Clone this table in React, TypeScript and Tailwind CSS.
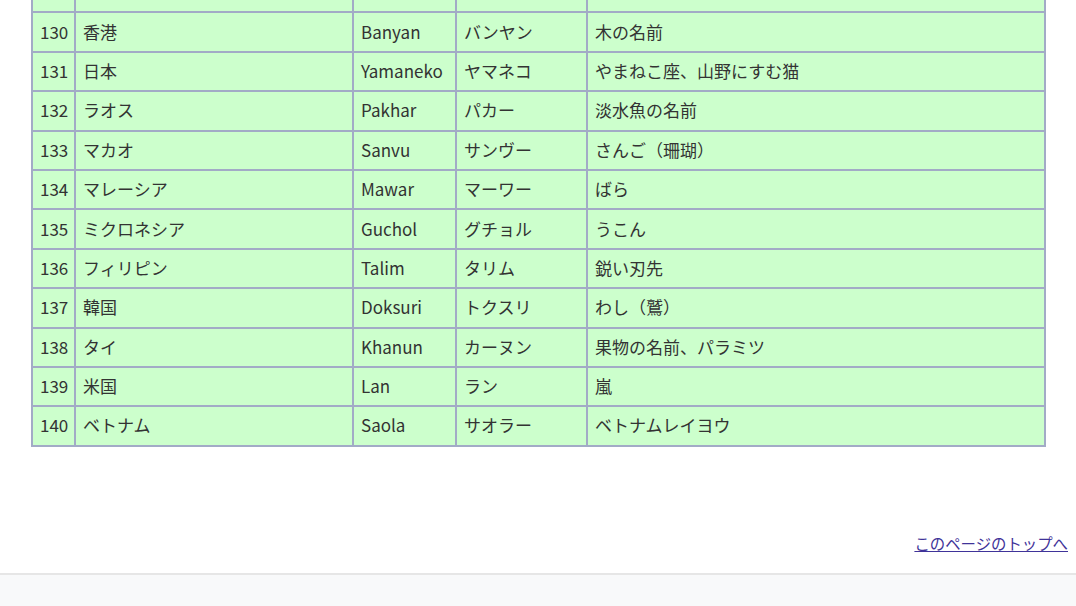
import React from "react";

type Row = [number, string, string, string, string];

const rows: Row[] = [
  [130, "香港", "Banyan", "バンヤン", "木の名前"],
  [131, "日本", "Yamaneko", "ヤマネコ", "やまねこ座、山野にすむ猫"],
  [132, "ラオス", "Pakhar", "パカー", "淡水魚の名前"],
  [133, "マカオ", "Sanvu", "サンヴー", "さんご（珊瑚）"],
  [134, "マレーシア", "Mawar", "マーワー", "ばら"],
  [135, "ミクロネシア", "Guchol", "グチョル", "うこん"],
  [136, "フィリピン", "Talim", "タリム", "鋭い刃先"],
  [137, "韓国", "Doksuri", "トクスリ", "わし（鷲）"],
  [138, "タイ", "Khanun", "カーヌン", "果物の名前、パラミツ"],
  [139, "米国", "Lan", "ラン", "嵐"],
  [140, "ベトナム", "Saola", "サオラー", "ベトナムレイヨウ"],
];

const cell = "border-2 border-[#a2abc6] px-[7px] h-[39.4px] pt-0 pb-[2px] align-middle";

export default function App() {
  return (
    <div
      className="min-h-screen bg-white text-[#333] text-[17px]"
      style={{ fontFamily: '"Noto Sans CJK JP", "Noto Sans", sans-serif' }}
    >
      <div className="pl-[31px] pr-2 -mt-[28px]">
        <table className="table-fixed border-collapse w-[1015px] bg-[#ccffcc] leading-[25px]">
          <colgroup>
            <col className="w-[43px]" />
            <col className="w-[278px]" />
            <col className="w-[103px]" />
            <col className="w-[131px]" />
            <col className="w-[458px]" />
          </colgroup>
          <tbody>
            {/* previous row, scrolled mostly out of view */}
            <tr>
              <td className={cell}></td>
              <td className={cell}></td>
              <td className={cell}></td>
              <td className={cell}></td>
              <td className={cell}></td>
            </tr>
            {rows.map((r) => (
              <tr key={r[0]}>
                <td className={cell}>{r[0]}</td>
                <td className={cell}>{r[1]}</td>
                <td className={cell}>{r[2]}</td>
                <td className={cell}>{r[3]}</td>
                <td className={cell}>{r[4]}</td>
              </tr>
            ))}
          </tbody>
        </table>

        <p className="mt-[84px] text-right text-[15.4px] leading-[24px]">
          <a href="#top" className="text-[#3f3399] underline">
            このページのトップへ
          </a>
        </p>
      </div>

      <footer className="mt-[18px] border-t-2 border-[#e6e6e6] bg-[#f8f9fa] h-[40px]" />
    </div>
  );
}
